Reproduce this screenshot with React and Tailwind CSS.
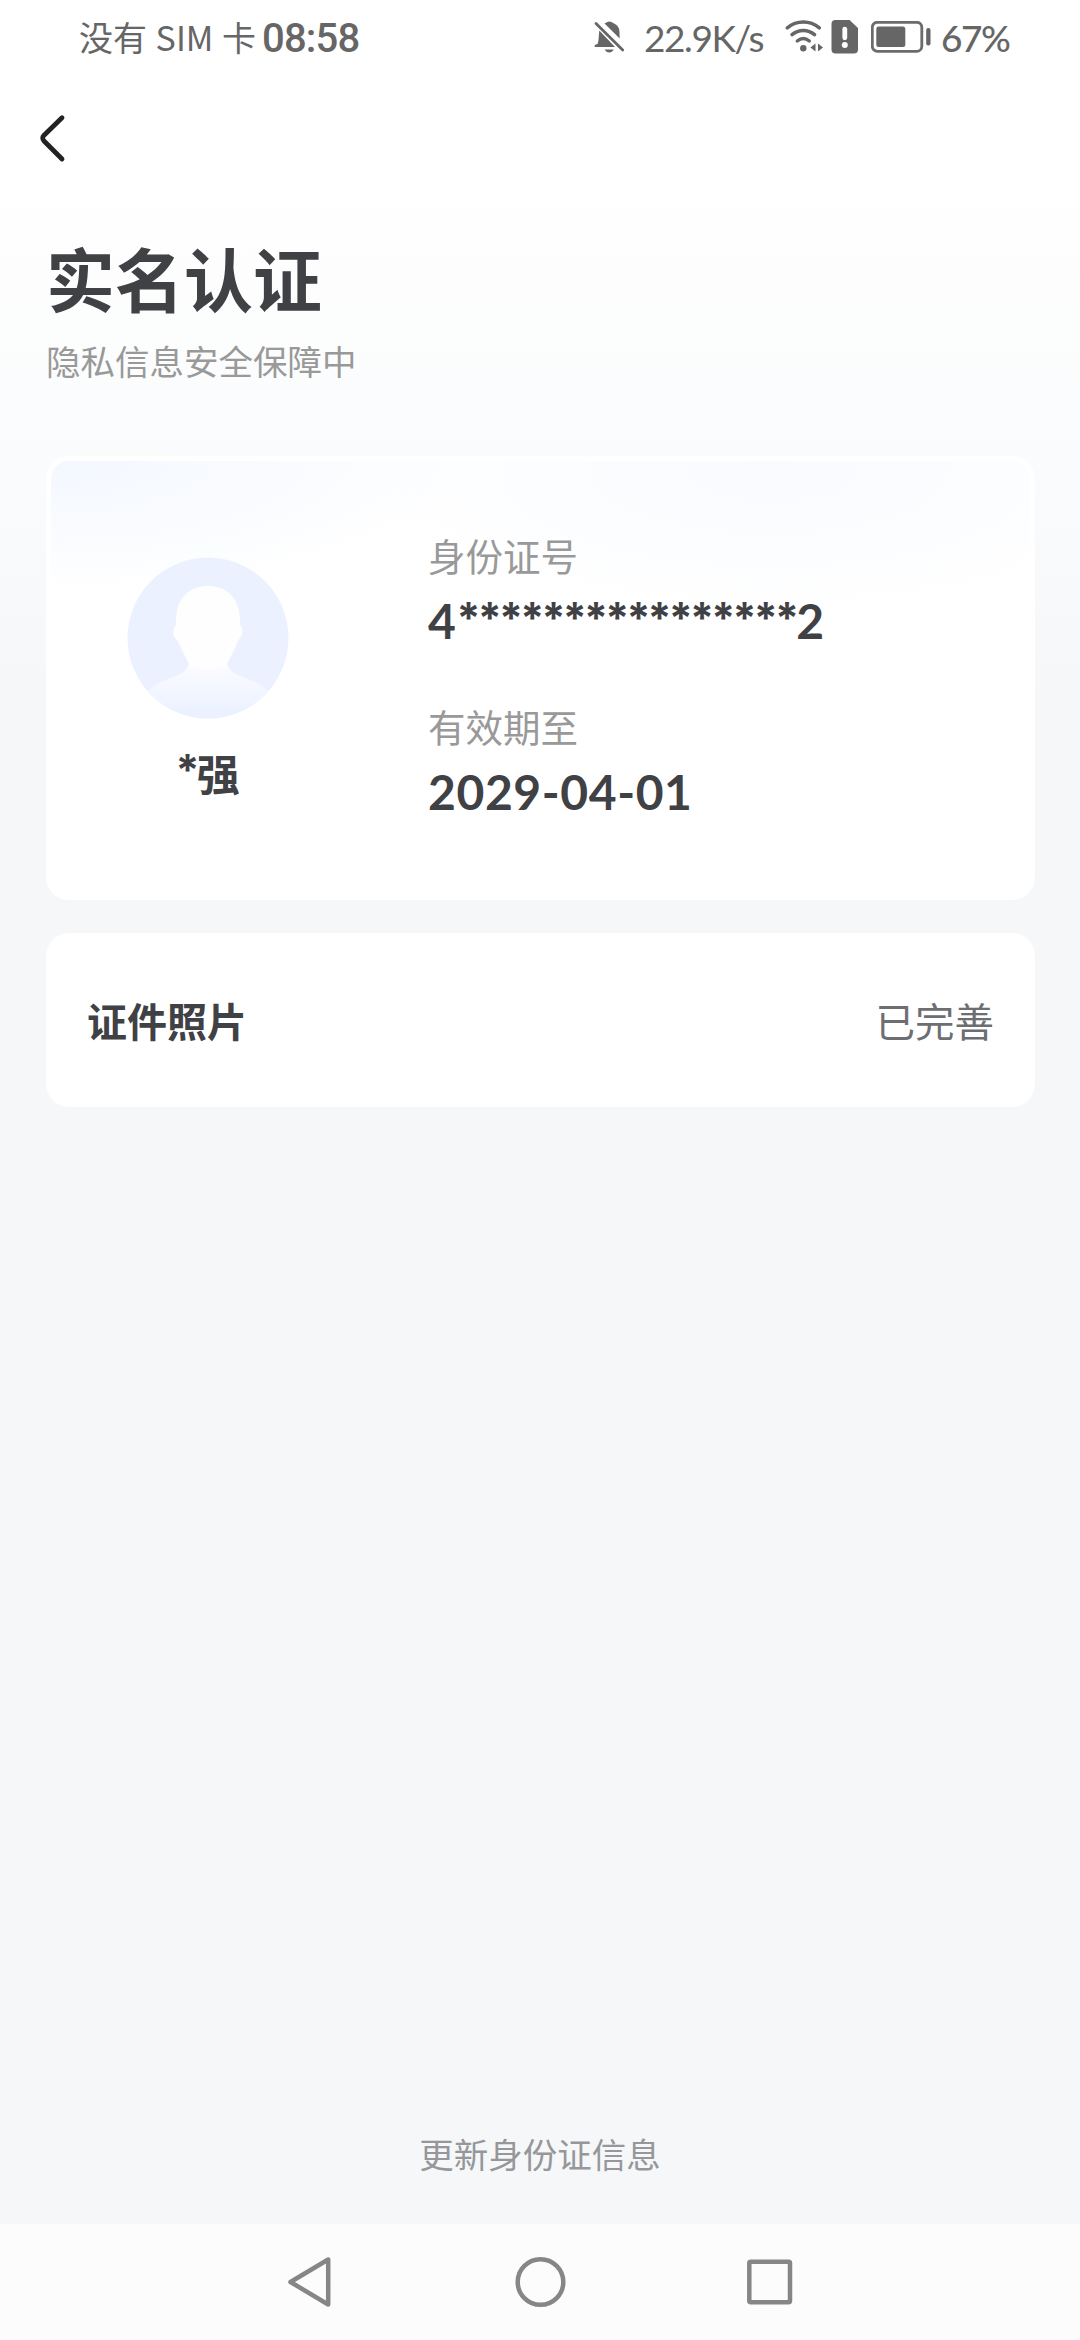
import React from 'react';

const BellOffIcon = () => (
  <svg className="mb-[3px]" width="31" height="34" viewBox="0 0 31 34" fill="none">
    <path d="M10.500 3.500c1-.5 1.800-.8 2.500-1.200 1.300-1.100 3.500-1.100 4.900 0 .8.600 1.700.9 2.600 1.400 3 1.400 4.800 4 4.900 7.300l.3 7.500z" fill="#666" />
    <path d="M5.300 10.500L21 26.900H.700v-1.700l3-1.400.7-3z" fill="#666" />
    <path d="M10.700 29.500h9c-.9 1.900-2.600 3-4.500 3s-3.600-1.100-4.500-3z" fill="#666" />
    <path d="M2 3.500l26.700 26.500" stroke="#666" strokeWidth="2.800" strokeLinecap="round" />
  </svg>
);

const WifiIcon = () => (
  <svg width="39" height="34" viewBox="0 0 39 34" fill="none">
    <g stroke="#666" strokeWidth="3.500" strokeLinecap="round">
      <path d="M2.300 7.800c9.400-7.600 22.600-7.600 32 0" />
      <path d="M7 14.600c6.700-5.600 15.900-5.600 22.600 0" />
      <path d="M12.300 21c3.700-3 8.300-3 12 0" />
    </g>
    <circle cx="18.300" cy="28.300" r="3.200" fill="#666" />
    <path d="M30.500 23.500v8L25.400 27.500zM33 23.500v8L38 27.500z" fill="#666" />
  </svg>
);

const SimAlertIcon = () => (
  <svg width="28" height="34" viewBox="0 0 28 34" fill="none">
    <path d="M4.500 0H18.500L27 8v21.500a4 4 0 0 1-4 4H4.500a4 4 0 0 1-4-4V4a4 4 0 0 1 4-4z" fill="#666" />
    <path d="M13.800 9.200v8.600" stroke="#fff" strokeWidth="4.800" strokeLinecap="round" />
    <circle cx="13.800" cy="25" r="3" fill="#fff" />
  </svg>
);

const BatteryIcon = () => (
  <svg width="60" height="32" viewBox="0 0 60 32" fill="none">
    <rect x="1.300" y="1.300" width="49.500" height="29" rx="5" stroke="#6b6b6b" strokeWidth="2.800" />
    <rect x="5.300" y="5.500" width="29" height="20.500" rx="2.500" fill="#666" />
    <rect x="55.200" y="7" width="4.300" height="17.500" rx="2" fill="#666" />
  </svg>
);

const StatusBar = () => (
  <div className="flex h-[76px] items-center pl-[79px] pr-[71px] text-[#666]">
    <span className="mb-[3px] w-[183px] whitespace-nowrap text-[34px] leading-[40px] [word-spacing:1px]">没有 SIM 卡</span>
    <span className="mt-[2px] font-[Roboto] text-[40px] font-medium leading-[40px] tracking-[-0.8px]">08:58</span>
    <div className="ml-auto flex items-center">
      <BellOffIcon />
      <span className="ml-[19px] w-[121px] whitespace-nowrap font-[Lato] text-[37px] leading-[40px] tracking-[-1.4px]">22.9K/s</span>
      <span className="mb-[3px] ml-[20px] flex items-center gap-[7px]">
        <WifiIcon />
        <SimAlertIcon />
      </span>
      <span className="mb-[2px] ml-[12px]">
        <BatteryIcon />
      </span>
      <span className="ml-[10px] w-[68px] whitespace-nowrap font-[Lato] text-[37px] font-medium leading-[40px] tracking-[-1.4px]">67%</span>
    </div>
  </div>
);

const Avatar = () => (
  <svg width="162" height="162" viewBox="0 0 162 162" fill="none">
    <defs>
      <linearGradient id="body" x1="0" y1="108" x2="0" y2="156" gradientUnits="userSpaceOnUse">
        <stop stopColor="#fbfcff" />
        <stop offset="1" stopColor="#ebf1ff" />
      </linearGradient>
      <clipPath id="disc">
        <circle cx="81" cy="81" r="80.500" />
      </clipPath>
    </defs>
    <circle cx="81" cy="81" r="80.500" fill="#ebf1ff" />
    <path
      clipPath="url(#disc)"
      d="M62 100c1 9-3 14-9 17-10 5-20 7-28 13-8 6-8 32-8 32h128s0-26-8-32c-8-6-18-8-28-13-6-3-10-8-9-17z"
      fill="url(#body)"
    />
    <path
      d="M81 29c17 0 28 10 31 25 1 5 1 9 1 14 3 4 3 10 0 13-2 2-3 5-4 8l-9 18c-4 4-11 6-19 6s-15-2-19-6l-9-18c-1-3-2-5-5-8-3-4-2-9 1-13 0-5 0-9 1-14 3-15 14-25 31-25z"
      fill="#fefefe"
    />
  </svg>
);

// Masked characters sit level with the top of the digits
const Mask = ({ children }) => (
  <span className="align-[6px] font-[Inter] text-[43px] leading-[0] tracking-[-2.8px]">{children}</span>
);

const InfoItem = ({ label, children }) => (
  <div>
    <div className="text-[37.5px] leading-[44px] text-[#999]">{label}</div>
    <div className="mt-[20px] h-[48px] whitespace-nowrap font-[Lato] text-[48px] font-bold leading-[48px] tracking-[0.6px] text-[#404145]">
      {children}
    </div>
  </div>
);

const NavBar = () => (
  <div className="flex h-[116px] items-center justify-center bg-[#fcfcfc]">
    <svg width="506" height="52" viewBox="0 0 506 52" fill="none" stroke="#868686" strokeWidth="4.500" strokeLinejoin="round">
      <path d="M41.200 3.500v45L3.500 26z" />
      <circle cx="253.500" cy="26" r="22.800" />
      <rect x="462.300" y="5.800" width="40.700" height="40.400" rx="1.500" />
    </svg>
  </div>
);

const App = () => {
  return (
    <div className="flex h-[2340px] w-[1080px] flex-col bg-[#f5f7f9] font-['Noto_Sans_CJK_SC',sans-serif]">
      <div className="bg-white">
        <StatusBar />
        {/* Back */}
        <div className="flex h-[132px] items-start pl-[38px] pt-[37px]">
          <svg width="30" height="50" viewBox="0 0 30 50" fill="none">
            <path d="M24 4.700L5.800 22.500a3.600 3.600 0 0 0 0 5.200L24 46" stroke="#222" strokeWidth="4.800" strokeLinecap="round" />
          </svg>
        </div>
      </div>

      <div className="flex flex-1 flex-col bg-[linear-gradient(180deg,#fefefe_0px,#fbfcfd_220px,#f5f7f9_480px)] px-[46px]">
        {/* Title */}
        <h1 className="mt-[29px] text-[69px] font-bold leading-[80px] text-[#404145]">实名认证</h1>
        <p className="mt-[23px] text-[34.5px] leading-[40px] text-[#999]">隐私信息安全保障中</p>

        {/* Identity card */}
        <div className="mt-[76px] flex h-[444px] w-[989px] rounded-[23px] border-[5px] border-white bg-[radial-gradient(ellipse_420px_130px_at_0px_0px,#f3f7ff,transparent),radial-gradient(ellipse_420px_150px_at_720px_10px,#f9fbff,transparent)] bg-white">
          <div className="flex w-[313px] flex-col items-center pt-[96px]">
            <Avatar />
            <div className="mt-[27px] text-[43px] font-bold leading-[52px] text-[#404145]">
              <Mask>*</Mask>强
            </div>
          </div>
          <div className="flex flex-col gap-[59px] pl-[64px] pt-[72px]">
            <InfoItem label="身份证号">
              4<Mask>****************</Mask>2
            </InfoItem>
            <InfoItem label="有效期至">2029-04-01</InfoItem>
          </div>
        </div>

        {/* Document photos */}
        <div className="mt-[33px] flex h-[174px] w-[989px] items-center justify-between rounded-[23px] bg-white px-[41px]">
          <span className="text-[40px] font-bold leading-[48px] text-[#404145]">证件照片</span>
          <span className="text-[39.5px] leading-[48px] text-[#6d6e72]">已完善</span>
        </div>

        <div className="mt-auto pb-[51px] text-center text-[34.5px] leading-[40px] text-[#95979a]">更新身份证信息</div>
      </div>

      <NavBar />
    </div>
  );
};

export default App;
